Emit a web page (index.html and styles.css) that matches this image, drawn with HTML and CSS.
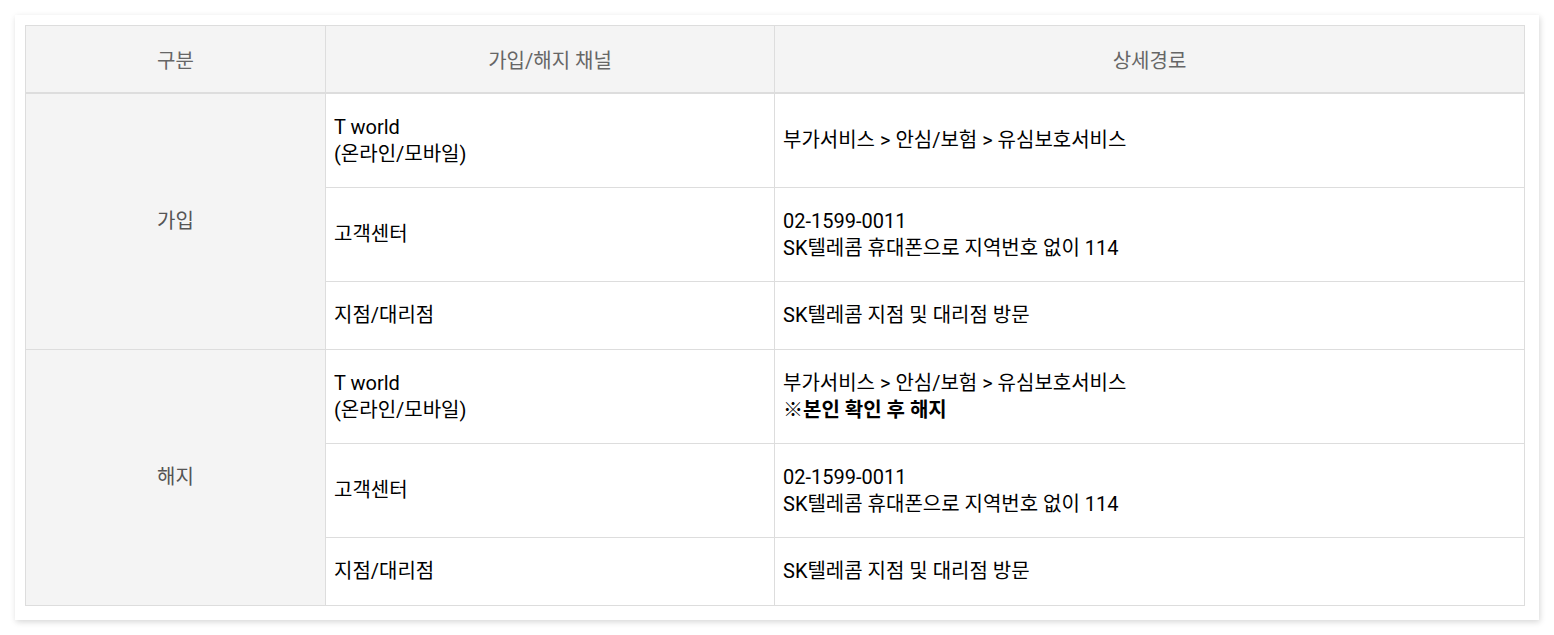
FILE: index.html
```html
<!DOCTYPE html>
<html lang="ko">
<head>
<meta charset="utf-8">
<link rel="stylesheet" href="styles.css">
</head>
<body>
<div class="card">
  <table class="route-table">
    <colgroup>
      <col class="col-type">
      <col class="col-channel">
      <col class="col-path">
    </colgroup>
    <thead>
      <tr>
        <th>구분</th>
        <th>가입/해지 채널</th>
        <th>상세경로</th>
      </tr>
    </thead>
    <tbody>
      <tr>
        <td class="type" rowspan="3">가입</td>
        <td>T world<br>(온라인/모바일)</td>
        <td>부가서비스 &gt; 안심/보험 &gt; 유심보호서비스</td>
      </tr>
      <tr>
        <td>고객센터</td>
        <td>02-1599-0011<br>SK텔레콤 휴대폰으로 지역번호 없이 114</td>
      </tr>
      <tr>
        <td>지점/대리점</td>
        <td>SK텔레콤 지점 및 대리점 방문</td>
      </tr>
      <tr>
        <td class="type" rowspan="3">해지</td>
        <td>T world<br>(온라인/모바일)</td>
        <td>부가서비스 &gt; 안심/보험 &gt; 유심보호서비스<br><strong>※본인 확인 후 해지</strong></td>
      </tr>
      <tr>
        <td>고객센터</td>
        <td>02-1599-0011<br>SK텔레콤 휴대폰으로 지역번호 없이 114</td>
      </tr>
      <tr>
        <td>지점/대리점</td>
        <td>SK텔레콤 지점 및 대리점 방문</td>
      </tr>
    </tbody>
  </table>
</div>
</body>
</html>
```

FILE: styles.css
```css
html, body {
  margin: 0;
  padding: 0;
  background: #fff;
}

body {
  padding: 15px;
  font-family: Roboto, "Noto Sans CJK KR", sans-serif;
  font-size: 20px;
  color: #000;
}

.card {
  background: #fff;
  padding: 10px 14px 14px 10px;
  box-shadow: 1px 2px 6px rgba(0, 0, 0, 0.16);
}

.route-table {
  width: 1500px;
  border-collapse: collapse;
  table-layout: fixed;
  border: 1px solid #ddd;
}

.col-type { width: 300px; }
.col-channel { width: 449px; }
.col-path { width: auto; }

.route-table th {
  height: 66px;
  padding: 0;
  background: #f4f4f4;
  color: #666;
  font-weight: 400;
  text-align: center;
  border: 1px solid #ddd;
  border-bottom: 2px solid #ddd;
}

.route-table td {
  padding: 20px 8px;
  line-height: 26.6px;
  text-align: left;
  vertical-align: middle;
  border: 1px solid #ddd;
}

.route-table td.type {
  background: #f4f4f4;
  color: #555;
  text-align: center;
}

.route-table strong {
  font-weight: 700;
}
```
